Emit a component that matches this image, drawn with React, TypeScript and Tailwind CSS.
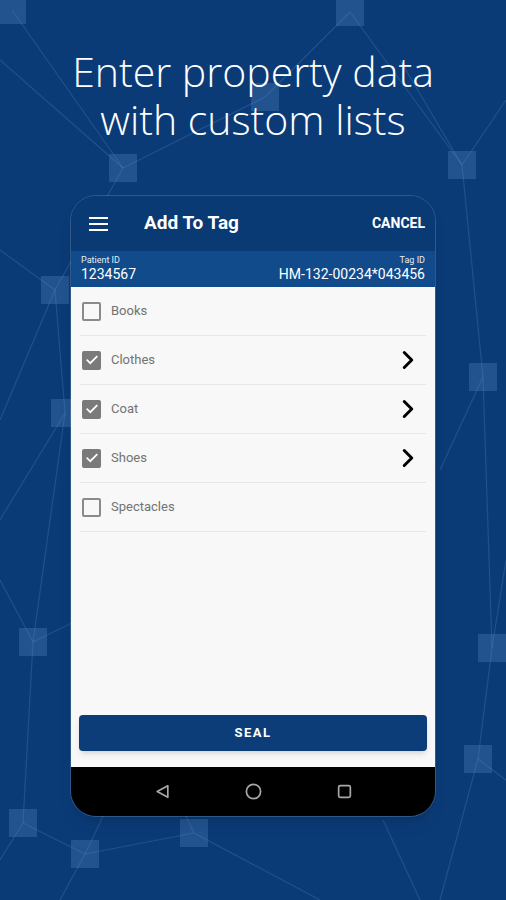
import React from 'react'
import { ChevronRight } from 'lucide-react'

const nodes: [number, number][] = [
  [12, 10], [350, 12], [123, 168], [462, 165], [55, 290], [483, 377], [65, 413],
  [33, 642], [492, 648], [478, 759], [23, 823], [85, 854], [194, 833], [265, 97],
]

const lines: [number, number, number, number][] = [
  [12, 10, 123, 168], [123, 168, 55, 290], [123, 168, 265, 97], [265, 97, 350, 12],
  [350, 12, 462, 165], [462, 165, 483, 377], [55, 290, 65, 413], [65, 413, 33, 642],
  [33, 642, 23, 823], [23, 823, 85, 854], [85, 854, 194, 833], [194, 833, 320, 900],
  [33, 642, 200, 560], [492, 648, 478, 759], [478, 759, 440, 900], [492, 648, 506, 560],
  [483, 377, 492, 648], [462, 165, 506, 100], [55, 290, 0, 420], [33, 642, 0, 580],
  [478, 759, 506, 780], [23, 823, 0, 860], [85, 854, 60, 900], [194, 833, 150, 740],
  [383, 820, 420, 900], [0, 60, 123, 168], [462, 165, 400, 60], [55, 290, 0, 250],
  [65, 413, 0, 520], [483, 377, 440, 470], [85, 854, 130, 760],
]

function Backdrop() {
  return (
    <svg className="absolute inset-0" width="506" height="900" viewBox="0 0 506 900">
      {lines.map(([x1, y1, x2, y2], i) => (
        <line key={i} x1={x1} y1={y1} x2={x2} y2={y2} stroke="#6f9fd6" strokeOpacity="0.22" strokeWidth="1.2" />
      ))}
      {nodes.map(([x, y], i) => (
        <rect key={i} x={x - 14} y={y - 14} width="28" height="28" fill="#5a8cc8" fillOpacity="0.3" />
      ))}
    </svg>
  )
}

function Checkbox({ checked }: { checked: boolean }) {
  if (checked) {
    return (
      <div className="w-[19px] h-[19px] rounded-[2px] bg-[#7a7a7a] flex items-center justify-center">
        <svg width="14" height="14" viewBox="0 0 24 24" fill="none" stroke="#fff" strokeWidth="3" strokeLinecap="square">
          <path d="M4 12.5l5 5L20 6.5" />
        </svg>
      </div>
    )
  }
  return <div className="w-[19px] h-[19px] rounded-[2px] border-2 border-[#8a8a8a]" />
}

const items = [
  { label: 'Books', checked: false },
  { label: 'Clothes', checked: true },
  { label: 'Coat', checked: true },
  { label: 'Shoes', checked: true },
  { label: 'Spectacles', checked: false },
]

export default function App() {
  return (
    <div className="relative w-[506px] h-[900px] overflow-hidden bg-[#0b3b77]" style={{ fontFamily: 'Roboto, sans-serif' }}>
      <Backdrop />
      <div className="relative flex flex-col items-center">
        <h1
          className="pt-[47px] text-center text-white text-[41px] leading-[48px] font-light"
          style={{ fontFamily: '"Open Sans", sans-serif' }}
        >
          Enter property data
          <br />
          with custom lists
        </h1>

        <div className="mt-[52px] w-[366px] h-[622px] rounded-[26px] overflow-hidden flex flex-col border border-white/15 shadow-lg">
          {/* app bar */}
          <div className="h-[55px] bg-[#0a3a73] flex items-center pl-[18px] pr-[10px] shrink-0">
            <div className="flex flex-col gap-[4px] w-[19px]">
              <span className="h-[2px] bg-white" />
              <span className="h-[2px] bg-white" />
              <span className="h-[2px] bg-white" />
            </div>
            <span className="ml-[36px] text-white text-[19px] font-bold">Add To Tag</span>
            <span className="ml-auto text-white text-[14px] font-bold">CANCEL</span>
          </div>

          {/* ids */}
          <div className="h-[36px] bg-[#114b8c] flex justify-between items-end px-[10px] pb-[4px] shrink-0 text-white">
            <div className="flex flex-col">
              <span className="text-[9px] leading-[11px] opacity-90">Patient ID</span>
              <span className="text-[14px] leading-[17px]">1234567</span>
            </div>
            <div className="flex flex-col items-end">
              <span className="text-[9px] leading-[11px] opacity-90">Tag ID</span>
              <span className="text-[14px] leading-[17px]">HM-132-00234*043456</span>
            </div>
          </div>

          {/* list */}
          <div className="flex-1 bg-[#f7f8f7] flex flex-col">
            <div className="flex-1">
              {items.map((it) => (
                <div key={it.label} className="h-[49px] mx-[9px] border-b border-[#e6e7e6] flex items-center pl-[2px] pr-[3px]">
                  <Checkbox checked={it.checked} />
                  <span className="ml-[10px] text-[13px] text-[#737373]">{it.label}</span>
                  {it.checked && (
                    <ChevronRight className="ml-auto text-black" size={30} strokeWidth={2.4} />
                  )}
                </div>
              ))}
            </div>
            <button className="mx-[8px] mb-[16px] h-[36px] rounded-[4px] bg-[#0c3d79] text-white text-[13px] font-bold tracking-[1.5px] shadow-md">
              SEAL
            </button>
          </div>

          {/* nav */}
          <div className="h-[49px] bg-black flex items-center justify-center gap-[74px] shrink-0">
            <svg width="17" height="17" viewBox="0 0 16 16" fill="none" stroke="#a8a8a8" strokeWidth="1.6">
              <path d="M13 2.5v11L3 8z" strokeLinejoin="round" />
            </svg>
            <svg width="17" height="17" viewBox="0 0 16 16" fill="none" stroke="#a8a8a8" strokeWidth="1.6">
              <circle cx="8" cy="8" r="6.7" />
            </svg>
            <svg width="17" height="17" viewBox="0 0 16 16" fill="none" stroke="#a8a8a8" strokeWidth="1.6">
              <rect x="2.5" y="2.5" width="11" height="11" rx="1.5" />
            </svg>
          </div>
        </div>
      </div>
    </div>
  )
}
